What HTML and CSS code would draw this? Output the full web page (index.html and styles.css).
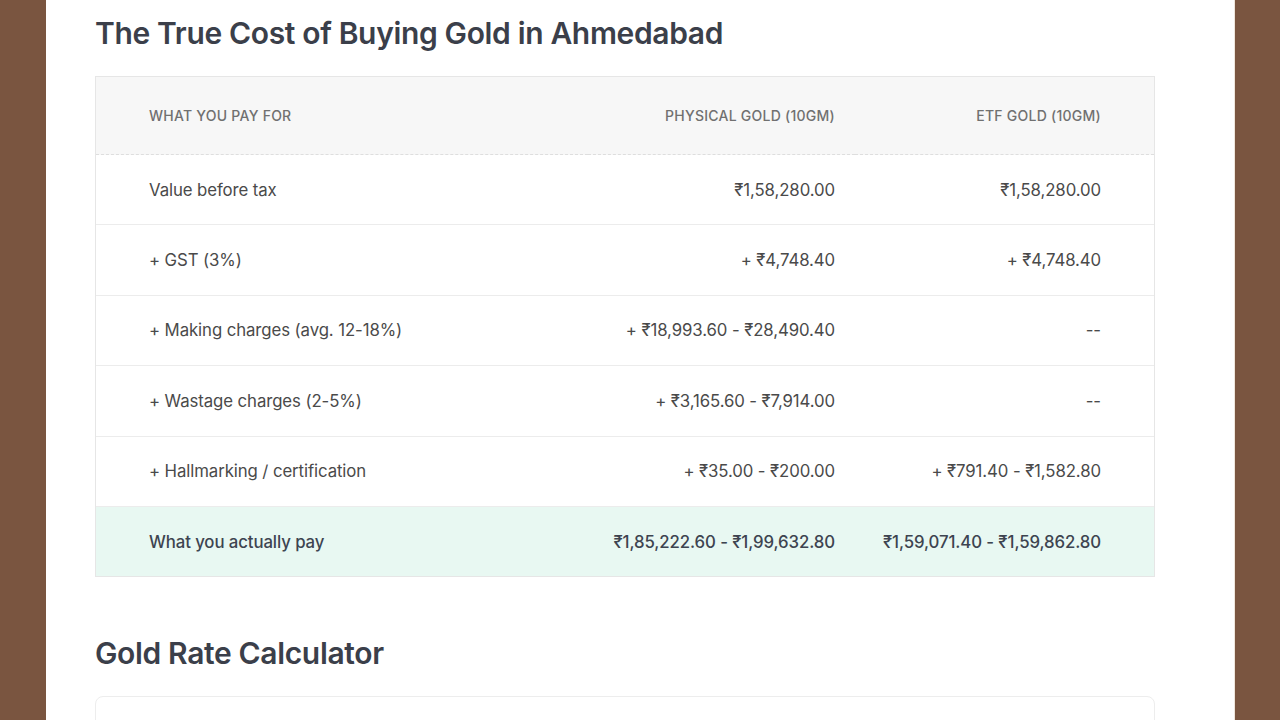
FILE: index.html
```html
<!DOCTYPE html>
<html lang="en">
<head>
<meta charset="utf-8">
<title>The True Cost of Buying Gold in Ahmedabad</title>
<link rel="stylesheet" href="styles.css">
</head>
<body>
<div class="page">
  <main class="content">
    <h2 class="section-title">The True Cost of Buying Gold in Ahmedabad</h2>
    <div class="table-wrap">
      <table class="cost-table">
        <colgroup>
          <col class="c1">
          <col class="c2">
          <col class="c3">
        </colgroup>
        <thead>
          <tr>
            <th>What you pay for</th>
            <th class="num">Physical Gold (10gm)</th>
            <th class="num">ETF Gold (10gm)</th>
          </tr>
        </thead>
        <tbody>
          <tr>
            <td>Value before tax</td>
            <td class="num">₹1,58,280.00</td>
            <td class="num">₹1,58,280.00</td>
          </tr>
          <tr>
            <td>+ GST (3%)</td>
            <td class="num">+ ₹4,748.40</td>
            <td class="num">+ ₹4,748.40</td>
          </tr>
          <tr>
            <td>+ Making charges (avg. 12-18%)</td>
            <td class="num">+ ₹18,993.60 - ₹28,490.40</td>
            <td class="num">--</td>
          </tr>
          <tr>
            <td>+ Wastage charges (2-5%)</td>
            <td class="num">+ ₹3,165.60 - ₹7,914.00</td>
            <td class="num">--</td>
          </tr>
          <tr>
            <td>+ Hallmarking / certification</td>
            <td class="num">+ ₹35.00 - ₹200.00</td>
            <td class="num">+ ₹791.40 - ₹1,582.80</td>
          </tr>
          <tr class="total">
            <td>What you actually pay</td>
            <td class="num">₹1,85,222.60 - ₹1,99,632.80</td>
            <td class="num">₹1,59,071.40 - ₹1,59,862.80</td>
          </tr>
        </tbody>
      </table>
    </div>

    <h2 class="section-title calc-title">Gold Rate Calculator</h2>
    <div class="calc-card"></div>
  </main>
</div>
</body>
</html>
```

FILE: styles.css
```css
html, body {
  margin: 0;
  padding: 0;
}
body {
  background: #7a5540;
  font-family: Inter, "Noto Sans", sans-serif;
  height: 720px;
  overflow: hidden;
}
.page {
  background: #ffffff;
  margin: 0 46px;
  height: 720px;
  overflow: hidden;
  box-shadow: 1px 0 0 #efe6dc;
}
.content {
  padding: 0 79px 0 49px;
}
.section-title {
  margin: 0;
  padding-top: 14px;
  font-size: 30px;
  line-height: 38px;
  font-weight: 600;
  color: #3b3f4a;
  letter-spacing: -0.35px;
}
.table-wrap {
  margin-top: 24px;
  border: 1px solid #e6e6e6;
}
.cost-table {
  width: 100%;
  border-collapse: collapse;
  table-layout: fixed;
  font-family: Inter, "Noto Sans", sans-serif;
}
.c1 { width: auto; }
.c2 { width: 267px; }
.c3 { width: 299px; }
.cost-table th,
.cost-table td {
  padding: 0 20px;
  text-align: left;
  white-space: nowrap;
}
.cost-table th:first-child,
.cost-table td:first-child {
  padding-left: 53px;
}
.cost-table th:last-child,
.cost-table td:last-child {
  padding-right: 53px;
}
.cost-table .num {
  text-align: right;
}
.cost-table thead th {
  background: #f7f7f7;
  height: 77px;
  font-size: 14px;
  font-weight: 500;
  text-transform: uppercase;
  color: #707070;
  letter-spacing: 0.25px;
  border-bottom: 1px dashed #dedede;
}
.cost-table tbody td {
  height: 69.4px;
  font-size: 16.8px;
  letter-spacing: -0.1px;
  color: #4a4a4a;
  border-bottom: 1px solid #ececec;
}
.cost-table tbody tr.total td {
  background: #e8f8f2;
  color: #3d4450;
  font-weight: 500;
  border-bottom: none;
}
.calc-title {
  margin-top: 45px;
  padding-top: 12px;
}
.calc-card {
  margin-top: 24px;
  height: 120px;
  border: 1px solid #ededed;
  border-radius: 8px;
}
```
